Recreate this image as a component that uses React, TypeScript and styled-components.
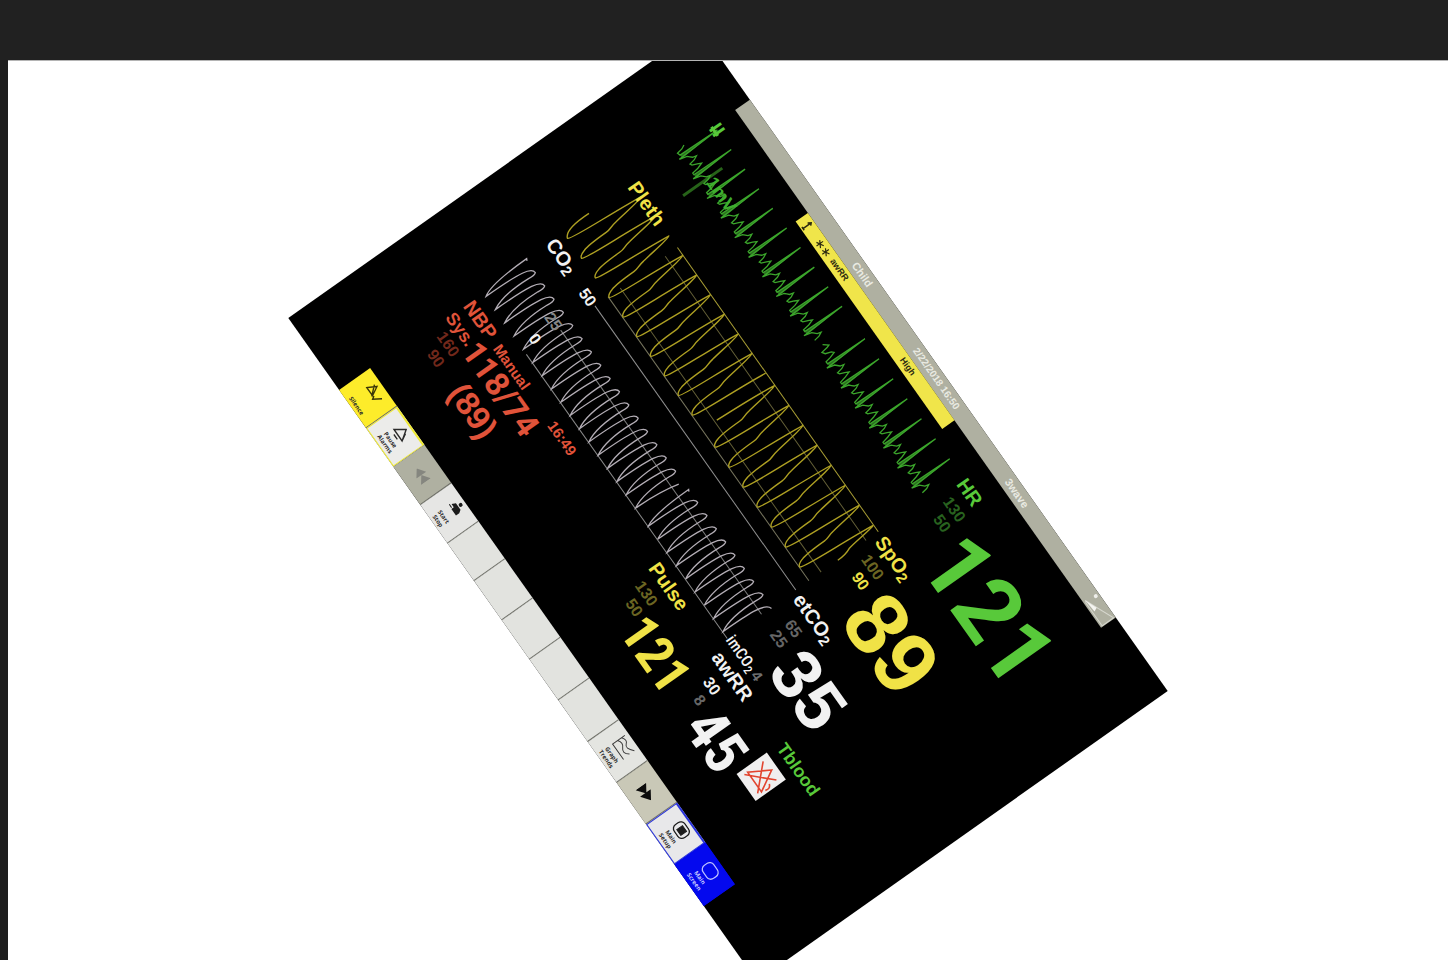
import React from "react";
import styled, { createGlobalStyle } from "styled-components";

const GlobalStyle = createGlobalStyle`
  *, *::before, *::after { box-sizing: border-box; }
  body { margin: 0; background: #1e1e1e; }
`;

const sans = `"Liberation Sans", Arial, sans-serif`;
const narrow = `"Liberation Sans Narrow", "Roboto Condensed", "Liberation Sans", sans-serif`;
const digits = `Roboto, "Liberation Sans", sans-serif`;

const green = "#58c93a";
const yellow = "#f0e246";
const red = "#e0533a";
const white = "#f2f2f2";

const Page = styled.div`
  min-height: 100vh;
  display: flex;
  flex-direction: column;
  background: #1e1e1e;
`;

const TopBar = styled.header`
  height: 60px;
  flex: none;
  background: #212121;
`;

const Stage = styled.main`
  flex: 1;
  margin-left: 8px;
  padding: 0 0 12px;
  height: calc(100vh - 60px);
  display: flex;
  align-items: center;
  justify-content: center;
  overflow: hidden;
  background: #fff;
  border-top: 1px solid #b4b4b4;
`;

const Monitor = styled.section`
  flex: none;
  width: 812px;
  height: 503px;
  padding: 0 92px 0 88px;
  display: flex;
  flex-direction: column;
  transform: rotate(54.75deg);
  background: #000;
  font-family: ${sans};
`;

const StatusBar = styled.div`
  height: 18px;
  width: 634px;
  flex: none;
  display: grid;
  grid-template-columns: 194px 105px 160px 1fr 32px;
  align-items: center;
  background: #afb0a1;
  color: #e9eae2;
  font-size: 11px;
  line-height: 16px;
  font-weight: 700;
`;

const DateText = styled.time`
  font-size: 10px;
`;

const AlarmBar = styled.div`
  height: 15px;
  width: 254px;
  flex: none;
  margin-left: 126px;
  padding-left: 6px;
  display: grid;
  grid-template-columns: 22px 24px 121px 1fr;
  align-items: center;
  background: #f0e54a;
  color: #2c2a10;
  font-size: 9px;
  line-height: 15px;
  font-weight: 700;
`;

const Body = styled.div`
  flex: 1;
  display: flex;
  flex-direction: column;
`;

const UpperRow = styled.div`
  height: 300px;
  display: grid;
  grid-template-columns: 433px 1fr;
`;

const LowerRow = styled.div`
  flex: 1;
  display: grid;
  grid-template-columns: 324px 109px 110px 1fr;
  padding-top: 4px;
`;

const WavePanel = styled.div`
  position: relative;
`;

const WaveSvg = styled.svg`
  display: block;
  width: 433px;
  height: 300px;
  overflow: visible;
`;

const WaveLabel = styled.span<{ $x: number; $y: number; $color: string; $size?: number }>`
  position: absolute;
  left: ${(p) => p.$x}px;
  top: ${(p) => p.$y}px;
  color: ${(p) => p.$color};
  font-size: ${(p) => p.$size ?? 20}px;
  line-height: 20px;
  font-weight: 700;
  white-space: nowrap;
`;

const Sub = styled.sub`
  font-size: 15px;
  line-height: 0;
  vertical-align: -3px;
`;

const NumericColumn = styled.div`
  display: grid;
  grid-template-rows: 100px 100px 100px;
  padding-top: 4px;
`;

const NumericBox = styled.div<{ $color: string }>`
  display: grid;
  grid-template-columns: 33px 1fr;
  grid-template-rows: 24px 1fr;
  color: ${(p) => p.$color};
`;

const NumericLabel = styled.div<{ $color?: string; $size?: number }>`
  grid-column: 1 / -1;
  color: ${(p) => p.$color ?? "inherit"};
  font-size: ${(p) => p.$size ?? 20}px;
  line-height: 20px;
  font-weight: 700;
  white-space: nowrap;
`;

const Limits = styled.div`
  display: flex;
  flex-direction: column;
  align-items: flex-end;
`;

const Limit = styled.span<{ $color: string }>`
  color: ${(p) => p.$color};
  font-size: 16px;
  line-height: 18px;
  font-weight: 700;
`;

const Value = styled.div<{ $size: number; $line: number; $font: string; $gap: number }>`
  margin: 6px 0 0 ${(p) => p.$gap}px;
  font-family: ${(p) => p.$font};
  font-size: ${(p) => p.$size}px;
  line-height: ${(p) => p.$line}px;
  font-weight: 700;
  white-space: nowrap;
`;

const InspiredLine = styled.div`
  grid-column: 1 / -1;
  margin-left: -6px;
  display: flex;
  align-items: baseline;
  gap: 3px;
  font-family: ${narrow};
  font-size: 16px;
  line-height: 14px;
  font-weight: 500;
  white-space: nowrap;
`;

const SmallSub = styled(Sub)`
  font-size: 12px;
`;

const Dim = styled.span`
  color: #6e6e6e;
  font-family: ${sans};
  font-size: 15px;
  font-weight: 700;
`;

const GasBox = styled(NumericBox)`
  grid-template-rows: 24px 59px 14px;
`;

const PressureBox = styled.div`
  padding-left: 3px;
  color: ${red};
  font-weight: 700;
`;

const PressureHead = styled.div`
  display: grid;
  grid-template-columns: 52px 94px 1fr;
  align-items: baseline;
  height: 20px;
  font-size: 20px;
  line-height: 20px;
`;

const Small = styled.span`
  font-size: 15px;
`;

const PressureBody = styled.div`
  display: flex;
`;

const PressureLimits = styled.div`
  width: 36px;
  display: flex;
  flex-direction: column;
  align-items: flex-end;
  font-size: 18px;
  line-height: 20px;
  padding-top: 2px;
`;

const PressureValues = styled.div`
  margin-top: -4px;
  font-family: ${digits};
  font-size: 33px;
  line-height: 35px;
  white-space: nowrap;
`;

const Mean = styled.div`
  padding-left: 26px;
  font-family: ${sans};
`;

const BloodTemp = styled.div`
  padding-left: 2px;
`;

const MutedAlarm = styled.div`
  width: 33px;
  height: 37px;
  margin: 6px 0 0 -2px;
  background: #f0efef;
`;

const SoftKeys = styled.nav`
  flex: none;
  width: 632px;
  height: 38px;
  display: grid;
  grid-template-columns: 47px 47px 47px 47px 46px 48px 48px 50px 51px 50px 51px 49px 51px;
`;

const Key = styled.button<{ $bg: string; $ring?: string; $fg?: string }>`
  appearance: none;
  height: 38px;
  margin: 0;
  padding: 3px 0 1px;
  border: 0 solid ${(p) => p.$ring ?? "#6c6d65"};
  border-width: ${(p) => (p.$ring ? "2px 1px 1px" : "0 1px 0 0")};
  border-radius: 0;
  display: flex;
  flex-direction: column;
  align-items: center;
  justify-content: space-between;
  background: ${(p) => p.$bg};
  color: ${(p) => p.$fg ?? "#2a2a2a"};
  font-family: "Open Sans", ${sans};
  font-size: 6px;
  line-height: 7px;
  font-weight: 700;
  white-space: pre-line;
`;

const LoneIcon = styled.span`
  margin: auto;
  display: flex;
`;

/* Electrocardiogram: each beat is a tall R spike followed by small ripples. */
function ecgPath(lead: string, peaks: number[], step: number) {
  let d = lead;
  const last = peaks.length - 1;
  peaks.forEach((p, i) => {
    d += ` L${p - 1},89 L${p},44 L${p + 2},92 L${p + 4},84 L${p + 6},82 L${p + 8},80`;
    d += ` L${p + 9},76 L${p + 11},80 L${p + 12},86`;
    d += i === last ? "" : ` L${p + 14},85 L${p + 16},80 L${p + 18},76 L${p + 20},82 L${p + step - 3},89`;
  });
  return d;
}

function spikePath(peaks: number[]) {
  return peaks.map((p) => `M${p - 1},89 L${p},46 L${p + 3},89 Z`).join(" ");
}

/* Plethysmogram: steep rise, slow fall with a dicrotic notch. */
function plethFall(p: number) {
  return ` C${p + 2},146 ${p + 4},168 ${p + 6},180 C${p + 7},188 ${p + 9},188 ${p + 9},194 C${p + 9},206 ${p + 9},216 ${p + 11},222 Q${p + 13},229 ${p + 16},229`;
}
function plethRise(p: number) {
  return ` C${p - 5},227 ${p - 4},180 ${p},145`;
}

/* Capnogram: plateau breaths between two baseline troughs. */
function breath(t: number, step: number) {
  return ` C${t},318 ${t},298 ${t + 2},286 Q${t + 4},275 ${t + 9},275 Q${t + 11},277 ${t + 10},284 C${t + 9},300 ${t + 10},318 ${t + step},329`;
}

const series = (first: number, step: number, count: number) =>
  Array.from({ length: count }, (_, i) => Math.round((first + i * step) * 10) / 10);

const ecgA = series(94, 24, 10);
const ecgB = series(349.6, 24.5, 7);
const plethA = series(104.5, 24, 10);
const plethB = series(335.7, 24.45, 8);
const gasA = series(96.4, 16.2, 16);
const gasB = series(377.7, 16.15, 8);

const plethPathA =
  "M88,197 Q87,226 96,229" +
  plethA.map((p, i) => plethRise(p) + (i < plethA.length - 1 ? plethFall(p) : "")).join("");
const plethPathB =
  "M330.700,212 Q333,165 335.700,145" +
  plethB
    .map((p, i) =>
      i === plethB.length - 1
        ? ` C${p + 2},150 ${p + 3},170 ${p + 5},178 Q${p + 8},184 ${p + 8},194`
        : plethFall(p) + plethRise(plethB[i + 1])
    )
    .join("");
const gasPathA =
  "M91,275 L89,274 Q89,318 96.400,329" +
  gasA.map((t) => breath(t, 16.2)).join("") +
  " C356,316 356,300 361,280";
const gasPathB =
  "M373,276 L371,275 Q371,318 377.700,329" +
  gasB.map((t) => breath(t, 16.15)).join("") +
  " C507,300 507,278 516,276";

function Waves() {
  return (
    <WaveSvg viewBox="88 33 433 300" fill="none" aria-label="Waveforms">
      <path d="M128,62 V110" stroke="#276319" strokeWidth="3" />
      <path d={spikePath([...ecgA, ...ecgB])} fill="#2b6b20" />
      <path d={ecgPath("M87,80 L89,84 L90,90", ecgA, 24)} stroke="#3ba52b" strokeWidth="1.300" />
      <path
        d={ecgPath("M330,82 L334,77 L335,80 L336,87 L339,85 L341,79 L343,77 L345,83 L346,89", ecgB, 24.5)}
        stroke="#3ba52b"
        strokeWidth="1.300"
      />
      <path d="M88,47 H99" stroke={green} strokeWidth="3" />

      <path d="M167,144.500 H515" stroke="#a89d34" />
      <path d="M167,159.500 H515 M167,214.500 H515" stroke="#625e36" />
      <path d="M167,229.500 H515" stroke="#77755e" />
      <path d={plethPathA} stroke="#ad9f22" strokeWidth="1.400" />
      <path d={plethPathB} stroke="#ad9f22" strokeWidth="1.400" />

      <path d="M167,245.500 H515" stroke="#8f8f8f" />
      <path d="M167,287.500 H515" stroke="#7d7d7d" />
      <path d="M167,329.500 H515" stroke="#8a8a8a" />
      <path d={gasPathA} stroke="#b3adb5" strokeWidth="1.300" />
      <path d={gasPathB} stroke="#b3adb5" strokeWidth="1.300" />
    </WaveSvg>
  );
}

type Lim = { text: string; color: string };

function LimitPair({ items }: { items: Lim[] }) {
  return (
    <Limits>
      {items.map((l) => (
        <Limit key={l.text} $color={l.color}>
          {l.text}
        </Limit>
      ))}
    </Limits>
  );
}

export default function App() {
  return (
    <>
      <GlobalStyle />
      <Page>
        <TopBar />
        <Stage>
          <Monitor>
            <StatusBar>
              <span />
              <span>Child</span>
              <DateText>2/22/2018 16:50</DateText>
              <span>3wave</span>
              <svg width="32" height="18" viewBox="0 0 32 18" fill="none" aria-hidden="true">
                <path d="M1,15 L31,2 V16 H3 Z" stroke="#d6d7ce" />
                <path d="M1,15 L13,10 L15,14 Z" fill="#f4f4f0" />
                <circle cx="3" cy="4" r="2" fill="#eeeeea" />
              </svg>
            </StatusBar>
            <AlarmBar role="alert">
              <svg width="8" height="12" viewBox="0 0 8 12" fill="none" stroke="#2c2a10" aria-hidden="true">
                <path d="M4,11 V2 M2,4 L4,1 L6,3 M2,11 H6" strokeWidth="1.500" />
              </svg>
              <svg width="19" height="10" viewBox="0 0 19 10" fill="none" stroke="#2c2a10" aria-hidden="true">
                <path d="M4,1 V9 M1,3 L8,7 M8,3 L1,7 M14,1 V9 M11,3 L18,7 M18,3 L11,7" strokeWidth="1.200" />
              </svg>
              <span>awRR</span>
              <span>High</span>
            </AlarmBar>

            <Body>
              <UpperRow>
                <WavePanel>
                  <Waves />
                  <WaveLabel $x={0} $y={1} $color={green}>II</WaveLabel>
                  <WaveLabel $x={42} $y={35} $color="#3fae2e" $size={18}>1mV</WaveLabel>
                  <WaveLabel $x={1} $y={101} $color={yellow}>Pleth</WaveLabel>
                  <WaveLabel $x={0} $y={201} $color={white}>CO<Sub>2</Sub></WaveLabel>
                  <WaveLabel $x={59} $y={204} $color={white} $size={16}>50</WaveLabel>
                  <WaveLabel $x={59} $y={246} $color="#858585" $size={16}>25</WaveLabel>
                  <WaveLabel $x={67} $y={271} $color={white} $size={16}>0</WaveLabel>
                </WavePanel>
                <NumericColumn>
                  <NumericBox $color={green}>
                    <NumericLabel>HR</NumericLabel>
                    <LimitPair items={[{ text: "130", color: "#28621f" }, { text: "50", color: "#28621f" }]} />
                    <Value $size={91} $line={66} $font={digits} $gap={10}>121</Value>
                  </NumericBox>
                  <NumericBox $color={yellow}>
                    <NumericLabel>SpO<Sub>2</Sub></NumericLabel>
                    <LimitPair items={[{ text: "100", color: "#6b6522" }, { text: "90", color: yellow }]} />
                    <Value $size={88} $line={64} $font={sans} $gap={11}>89</Value>
                  </NumericBox>
                  <GasBox $color={white}>
                    <NumericLabel>etCO<Sub>2</Sub></NumericLabel>
                    <LimitPair items={[{ text: "65", color: "#666666" }, { text: "25", color: "#666666" }]} />
                    <Value $size={70} $line={52} $font={sans} $gap={11}>35</Value>
                    <InspiredLine>
                      <span>imCO<SmallSub>2</SmallSub></span>
                      <Dim>4</Dim>
                    </InspiredLine>
                  </GasBox>
                </NumericColumn>
              </UpperRow>

              <LowerRow>
                <PressureBox>
                  <PressureHead>
                    <span>NBP</span>
                    <Small>Manual</Small>
                    <Small>16:49</Small>
                  </PressureHead>
                  <PressureBody>
                    <PressureLimits>
                      <span>Sys.</span>
                      <Limit $color="#72281b">160</Limit>
                      <Limit $color="#72281b">90</Limit>
                    </PressureLimits>
                    <PressureValues>
                      <div>118/74</div>
                      <Mean>(89)</Mean>
                    </PressureValues>
                  </PressureBody>
                </PressureBox>

                <NumericBox $color={yellow}>
                  <NumericLabel>Pulse</NumericLabel>
                  <LimitPair items={[{ text: "130", color: "#6b6522" }, { text: "50", color: "#6b6522" }]} />
                  <Value $size={52} $line={62} $font={narrow} $gap={2}>121</Value>
                </NumericBox>

                <NumericBox $color={white}>
                  <NumericLabel>awRR</NumericLabel>
                  <LimitPair items={[{ text: "30", color: white }, { text: "8", color: "#666666" }]} />
                  <Value $size={60} $line={62} $font={narrow} $gap={8}>45</Value>
                </NumericBox>

                <BloodTemp>
                  <NumericLabel $color={green} $size={18}>Tblood</NumericLabel>
                  <MutedAlarm>
                    <svg width="33" height="37" viewBox="0 0 33 37" fill="none" stroke="#e2452f" strokeWidth="1.600" aria-label="Alarm off">
                      <path d="M17,6 L5,27 H29 Z M5,8 L28,31 M28,8 L5,31 M27,16 Q32,18 30,23" />
                    </svg>
                  </MutedAlarm>
                </BloodTemp>
              </LowerRow>
            </Body>

            <SoftKeys>
              <Key $bg="#fdec2a">
                <svg width="20" height="15" viewBox="0 0 20 15" fill="none" stroke="#3a3608" aria-hidden="true">
                  <path d="M6,2 L1,11 H11 Z M3,3 L11,12 M12,10 L14,13 L19,5" strokeWidth="1.400" />
                </svg>
                Silence
              </Key>
              <Key $bg="#ececea" $ring="#efe936">
                <svg width="18" height="15" viewBox="0 0 18 15" fill="none" stroke="#2a2a2a" aria-hidden="true">
                  <path d="M9,1 L2,11 H16 Z M6,14 H12 M12,4 L16,11" strokeWidth="1.400" />
                </svg>
                {"Pause\nAlarms"}
              </Key>
              <Key $bg="#afb0a1" aria-label="Previous keys">
                <LoneIcon>
                  <svg width="16" height="12" viewBox="0 0 16 12" fill="#85867f" aria-hidden="true">
                    <path d="M8,0 V12 L0,6 Z M16,0 V12 L8,6 Z" />
                  </svg>
                </LoneIcon>
              </Key>
              <Key $bg="#e6e6e4">
                <svg width="16" height="15" viewBox="0 0 16 15" aria-hidden="true">
                  <circle cx="8" cy="2" r="2" fill="#1c1c1c" />
                  <path d="M4,5 H12 L14,8 V12 H6 V9 H2 Z" fill="#1c1c1c" />
                  <path d="M1,11 H5 M10,8 V11" stroke="#1c1c1c" />
                </svg>
                {"Start\nStop"}
              </Key>
              <Key $bg="#e2e3df" aria-label="Unassigned key 1" />
              <Key $bg="#e2e3df" aria-label="Unassigned key 2" />
              <Key $bg="#e2e3df" aria-label="Unassigned key 3" />
              <Key $bg="#e2e3df" aria-label="Unassigned key 4" />
              <Key $bg="#e2e3df" aria-label="Unassigned key 5" />
              <Key $bg="#e4e5e1">
                <svg width="22" height="17" viewBox="0 0 22 17" fill="none" stroke="#3a3a3a" aria-hidden="true">
                  <path d="M2,1 V16 H21 M2,5 Q7,1 10,5 T20,2 M2,10 Q7,6 11,10 T20,8" />
                </svg>
                {"Graph\nTrends"}
              </Key>
              <Key $bg="#c9c8b7" aria-label="Next keys">
                <LoneIcon>
                  <svg width="17" height="13" viewBox="0 0 17 13" fill="#0c0c0c" aria-hidden="true">
                    <path d="M0,0 V13 L9,6 Z M8,0 V13 L17,6 Z" />
                  </svg>
                </LoneIcon>
              </Key>
              <Key $bg="#e8e8ea" $ring="#2a34dc">
                <svg width="18" height="15" viewBox="0 0 18 15" fill="none" stroke="#1c1c1c" aria-hidden="true">
                  <rect x="1" y="1" width="16" height="13" rx="5" strokeWidth="1.300" />
                  <rect x="6" y="4" width="7" height="7" fill="#1c1c1c" />
                </svg>
                {"Main\nSetup"}
              </Key>
              <Key $bg="#0409ee" $ring="#0409ee" $fg="#c9ccff">
                <svg width="18" height="15" viewBox="0 0 18 15" fill="none" stroke="#b9bdff" aria-hidden="true">
                  <rect x="1" y="1" width="16" height="13" rx="5" strokeWidth="1.300" />
                </svg>
                {"Main\nScreen"}
              </Key>
            </SoftKeys>
          </Monitor>
        </Stage>
      </Page>
    </>
  );
}
